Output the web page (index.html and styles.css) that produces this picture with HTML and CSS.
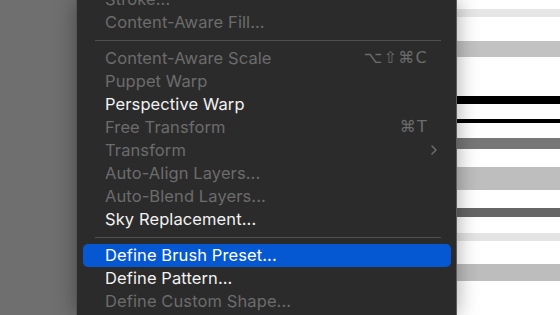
FILE: index.html
```html
<!DOCTYPE html>
<html>
<head>
<meta charset="utf-8">
<link rel="stylesheet" href="styles.css">
</head>
<body>
<div class="stage">
  <div class="backdrop"></div>
  <div class="menu">
    <ul class="list">
      <li class="item disabled"><span class="label">Stroke...</span></li>
      <li class="item disabled"><span class="label">Content-Aware Fill...</span></li>
      <li class="sep"></li>
      <li class="item disabled"><span class="label">Content-Aware Scale</span><span class="key">⌥⇧⌘C</span></li>
      <li class="item disabled"><span class="label">Puppet Warp</span></li>
      <li class="item"><span class="label">Perspective Warp</span></li>
      <li class="item disabled"><span class="label">Free Transform</span><span class="key">⌘T</span></li>
      <li class="item disabled"><span class="label">Transform</span><svg class="chev" width="8" height="12" viewBox="0 0 8 12"><path d="M2 2 L6 6 L2 10" fill="none" stroke="currentColor" stroke-width="1.6" stroke-linecap="round" stroke-linejoin="round"/></svg></li>
      <li class="item disabled"><span class="label">Auto-Align Layers...</span></li>
      <li class="item disabled"><span class="label">Auto-Blend Layers...</span></li>
      <li class="item"><span class="label">Sky Replacement...</span></li>
      <li class="sep"></li>
      <li class="item active"><span class="label">Define Brush Preset...</span></li>
      <li class="item"><span class="label">Define Pattern...</span></li>
      <li class="item disabled"><span class="label">Define Custom Shape...</span></li>
    </ul>
  </div>
  <div class="canvas"></div>
</div>
</body>
</html>
```
FILE: styles.css
```css
html, body {
  margin: 0;
  padding: 0;
  width: 560px;
  height: 315px;
  overflow: hidden;
  background: #6e6e6e;
}

.stage {
  display: flex;
  width: 560px;
  height: 315px;
}

.backdrop {
  width: 76px;
  flex: none;
  background: #6f6f6f;
}

.menu {
  width: 379px;
  flex: none;
  height: 315px;
  overflow: hidden;
  background: #2b2b2b;
  border-left: 1px solid #555;
  border-right: 1px solid #5e5e5e;
  position: relative;
  z-index: 1;
  box-shadow: 0 0 20px rgba(0, 0, 0, 0.35);
}

.list {
  list-style: none;
  margin: -12px 0 0 0;
  padding: 0 5px 0 6px;
  font-family: Inter, "Noto Sans", "DejaVu Sans", sans-serif;
  font-size: 16.5px;
  letter-spacing: 0.1px;
}

.item {
  height: 23px;
  box-sizing: border-box;
  display: flex;
  align-items: center;
  padding: 0 22px 2px 22px;
  border-radius: 5px;
  color: #f2f2f2;
  white-space: nowrap;
}

.item.disabled {
  color: #6c6c6c;
}

.item.active {
  background: #0558d2;
  color: #ffffff;
}

.label {
  flex: 1;
}

.key {
  font-family: "DejaVu Sans", Inter, sans-serif;
  font-size: 16px;
  letter-spacing: 1.3px;
  padding-right: 1px;
}

.chev {
  margin-right: -9px;
  display: block;
}

.sep {
  height: 13px;
  display: flex;
  align-items: center;
  padding: 0 10px 0 12px;
}

.sep::before {
  content: "";
  display: block;
  flex: 1;
  height: 1px;
  background: #505050;
}

.canvas {
  flex: 1;
  height: 315px;
  background: linear-gradient(to bottom,
    #ffffff 0px, #ffffff 9px,
    #e6e6e6 9px, #e6e6e6 17px,
    #ffffff 17px, #ffffff 41px,
    #c2c2c2 41px, #c2c2c2 57px,
    #ffffff 57px, #ffffff 96px,
    #000000 96px, #000000 104px,
    #ffffff 104px, #ffffff 119px,
    #000000 119px, #000000 123px,
    #ffffff 123px, #ffffff 138px,
    #777777 138px, #777777 149px,
    #ffffff 149px, #ffffff 167px,
    #bebebe 167px, #bebebe 190px,
    #ffffff 190px, #ffffff 208px,
    #666666 208px, #666666 217px,
    #ffffff 217px, #ffffff 233px,
    #e4e4e4 233px, #e4e4e4 241px,
    #ffffff 241px, #ffffff 264px,
    #bdbdbd 264px, #bdbdbd 281px,
    #ffffff 281px, #ffffff 315px);
}
```
